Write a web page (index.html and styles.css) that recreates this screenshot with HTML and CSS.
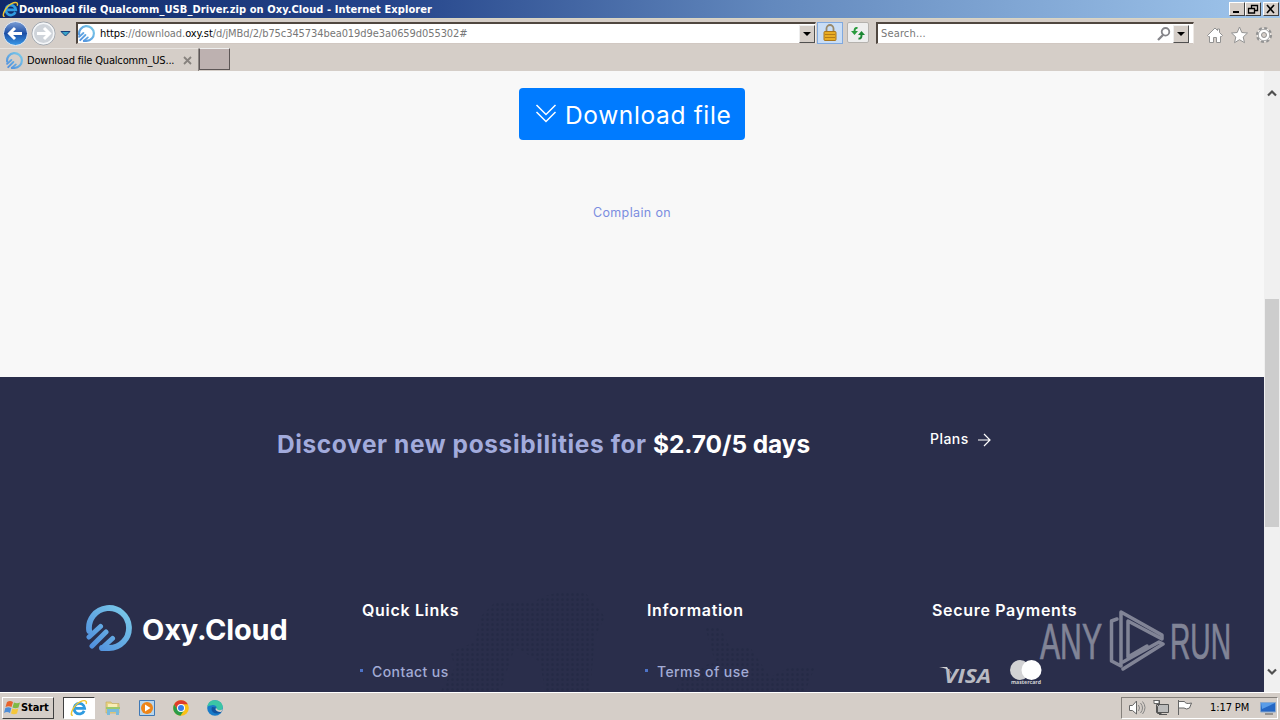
FILE: index.html
```html
<!DOCTYPE html>
<html lang="en">
<head>
  <meta charset="UTF-8">
  <title>Download file Qualcomm_USB_Driver.zip on Oxy.Cloud</title>
  <link rel="stylesheet" href="styles.css">
</head>
<body>
  <svg class="defs" width="0" height="0">
    <defs>
      <linearGradient id="oxyGrad" gradientUnits="userSpaceOnUse" x1="0" y1="46" x2="46" y2="0">
        <stop offset="0" stop-color="#4b88dc"/>
        <stop offset="1" stop-color="#7fd0ea"/>
      </linearGradient>
      <linearGradient id="backGrad" x1="0" y1="0" x2="0" y2="1">
        <stop offset="0" stop-color="#7d9fd6"/>
        <stop offset=".5" stop-color="#1d4fa6"/>
        <stop offset="1" stop-color="#3a9bea"/>
      </linearGradient>
      <pattern id="dots" width="5" height="5" patternUnits="userSpaceOnUse">
        <circle cx="2.5" cy="2.5" r="1.5" fill="#252a46"/>
      </pattern>
      <symbol id="oxy" viewBox="0 0 46 46">
        <path d="M3.200 26 A20 20 0 1 1 23 43 H16" fill="none" stroke="url(#oxyGrad)" stroke-width="5.800" stroke-linecap="round"/>
        <path d="M3 32 L14.500 21.500 M6 41 L20 27 M16 43 L26.500 33.500" fill="none" stroke="url(#oxyGrad)" stroke-width="5" stroke-linecap="round"/>
      </symbol>
      <symbol id="ie" viewBox="0 0 16 16">
        <path d="M12.600 10.500 A4.700 4.700 0 1 1 13 8.300 H5" fill="none" stroke="#2f9be0" stroke-width="2.500"/>
        <path d="M2.500 14.500 C-1 15 3 5.500 9 2.500 C13 .5 15.500 1.500 14.300 4.500" fill="none" stroke="#f0c531" stroke-width="1.300"/>
      </symbol>
    </defs>
  </svg>

  <div class="titlebar">
    <svg class="ie" width="17" height="17"><use href="#ie"/></svg>
    <span class="title">Download file Qualcomm_USB_Driver.zip on Oxy.Cloud - Internet Explorer</span>
    <div class="win-buttons">
      <span class="win-btn"><svg width="12" height="10"><path d="M2 8h6" stroke="#000" stroke-width="2"/></svg></span>
      <span class="win-btn"><svg width="12" height="10"><path d="M4.500 4V1.500H10.500V6.500H8M4 1.500H11M1.500 4.500H7.500V9H1.500ZM1 4.500H8" fill="none" stroke="#000" stroke-width="1.300"/></svg></span>
      <span class="win-btn close"><svg width="12" height="10"><path d="M2 1l7 8M9 1l-7 8" stroke="#000" stroke-width="1.600"/></svg></span>
    </div>
  </div>

  <div class="navbar">
    <svg class="arrows" width="72" height="28" viewBox="0 0 72 28">
      <circle cx="15.500" cy="14.500" r="12" fill="url(#backGrad)" stroke="#e9edf2"/>
      <path d="M22 14.500H10M15 9l-5.500 5.500 5.500 5.500" fill="none" stroke="#fff" stroke-width="3"/>
      <circle cx="43.500" cy="14.500" r="11.500" fill="#cfd4da" stroke="#9da3ab"/>
      <circle cx="43.500" cy="14.500" r="10.300" fill="none" stroke="#f4f6f8" stroke-width="1.500"/>
      <path d="M37 14.500h12M44 9l5.500 5.500-5.500 5.500" fill="none" stroke="#fff" stroke-width="3"/>
      <path d="M61 12.500h9l-4.500 4.500z" fill="#39a5c9" stroke="#173f7c"/>
    </svg>
    <div class="address">
      <svg width="17" height="17"><use href="#oxy"/></svg>
      <span class="url"><b>https</b>://download.<b>oxy.st</b>/d/jMBd/2/b75c345734bea019d9e3a0659d055302#</span>
      <span class="drop"></span>
    </div>
    <div class="lock">
      <svg width="16" height="18" viewBox="0 0 16 18">
        <path d="M4.500 8V4.500a3.500 3.500 0 0 1 7 0V8" fill="none" stroke="#99896a" stroke-width="1.800"/>
        <rect x="2" y="7.500" width="12" height="9" rx="1" fill="#e9ad23" stroke="#a9761c"/>
        <path d="M3 10.500h10M3 13.500h10" stroke="#b57c16"/>
      </svg>
    </div>
    <div class="refresh">
      <svg width="16" height="16" viewBox="0 0 16 16">
        <path d="M7.500 3C5 2.500 4.500 4 4.500 7" fill="none" stroke="#299b3d" stroke-width="2"/>
        <path d="M1 6h7l-3.500 4z" fill="#299b3d"/>
        <path d="M8.500 13.500c2.500.5 3-1 3-4" fill="none" stroke="#1b8733" stroke-width="2"/>
        <path d="M8 10h7l-3.500-4z" fill="#1b8733"/>
      </svg>
    </div>
    <div class="search">
      <span>Search...</span>
      <svg width="16" height="16" viewBox="0 0 16 16"><circle cx="9.500" cy="5.800" r="3.800" fill="none" stroke="#85858a" stroke-width="1.800"/><path d="M7 9l-5 5" stroke="#85858a" stroke-width="2.300"/></svg>
      <span class="drop"></span>
    </div>
    <svg class="tools" width="68" height="20" viewBox="0 0 68 20" fill="#fff" stroke="#929292">
      <path d="M1.500 10.500L9 3l2.500 2.500V4H13.500V7.500L16.500 10.500 15.500 11.500H14.500V17.500H10.500V12.500H7.500V17.500H3.500V11.500H2.500Z"/>
      <path d="M33.500 2l2.300 5.500 5.700.5-4.300 4 1.300 5.700-5-3-5 3 1.300-5.700-4.300-4 5.700-.5z"/>
      <circle cx="58" cy="10" r="6.800" stroke-width="2.600" stroke-dasharray="3 2.340"/>
      <circle cx="58" cy="10" r="5.900" stroke="none"/>
      <circle cx="58" cy="10" r="5.700" stroke-width=".8"/>
      <circle cx="58" cy="10" r="2.500" fill="#d5cec8"/>
    </svg>
  </div>

  <div class="tabs">
    <div class="tab">
      <svg width="17" height="17"><use href="#oxy"/></svg>
      <span>Download file Qualcomm_US...</span>
      <svg class="tab-close" width="9" height="9"><path d="M1 1l7 7M8 1l-7 7" stroke="#87827e" stroke-width="1.800"/></svg>
    </div>
    <div class="new-tab"></div>
  </div>

  <div class="viewport">
    <div class="page">
      <main>
        <a class="download">
          <svg width="22" height="20" viewBox="0 0 22 20"><path d="M1.500 1l9.500 9.500L20.500 1M1.500 8l9.500 9.500L20.500 8" fill="none" stroke="#fff" stroke-width="1.500"/></svg>
          <span>Download file</span>
        </a>
        <a class="complain">Complain on</a>
      </main>
      <footer>
        <svg class="map" width="440" height="105" viewBox="0 0 440 105">
          <path d="M10 65L35 55L40 30L55 15H95L100 10L120 5H145L165 30L155 50L150 105H105L100 75L75 60L70 75L60 105H0L15 80Z" fill="url(#dots)"/>
          <path d="M265 40H280L290 60H310L320 75L330 90L350 80H375L365 105H235L245 85L275 75Z" fill="url(#dots)"/>
        </svg>
        <div class="promo">
          <h2>Discover new possibilities for <b>$2.70/5 days</b></h2>
          <a class="plans"><span>Plans</span> <svg width="14" height="14" viewBox="0 0 14 14"><path d="M1 7h12M7 1l6 6-6 6" fill="none" stroke="#fff" stroke-width="1.200"/></svg></a>
        </div>
        <div class="columns">
          <div class="brand">
            <svg width="46" height="46"><use href="#oxy"/></svg>
            <span>Oxy.Cloud</span>
          </div>
          <div class="column">
            <h3 class="quick">Quick Links</h3>
            <a class="contact">Contact us</a>
          </div>
          <div class="column">
            <h3 class="info">Information</h3>
            <a class="terms">Terms of use</a>
          </div>
          <div class="column">
            <h3 class="secure">Secure Payments</h3>
            <div class="cards">
              <svg width="56" height="24" viewBox="0 0 56 24">
                <path d="M-1 3h8l5 8-1-3C8 5 4 4 -1 3z" fill="#d2d2d4"/>
                <text x="4" y="19" textLength="47" lengthAdjust="spacingAndGlyphs">VISA</text>
              </svg>
              <svg width="34" height="30" viewBox="0 0 34 30">
                <circle cx="10" cy="10" r="10" fill="#d2d2d4"/>
                <circle cx="21.500" cy="10" r="10" fill="#fff"/>
                <text class="mc" x="1" y="24" textLength="30" lengthAdjust="spacingAndGlyphs">mastercard</text>
              </svg>
            </div>
          </div>
        </div>
      </footer>
    </div>
    <div class="scrollbar">
      <svg width="12" height="8"><path d="M2 6.500L6 2.500l4 4" fill="none" stroke="#505050" stroke-width="2.200"/></svg>
      <div class="thumb"></div>
      <svg width="12" height="8"><path d="M2 1.500L6 5.500l4-4" fill="none" stroke="#505050" stroke-width="2.200"/></svg>
    </div>
    <svg class="watermark" width="200" height="66" viewBox="0 0 200 66">
      <text x="2" y="49" textLength="62" lengthAdjust="spacingAndGlyphs">ANY</text>
      <g fill="none" stroke-width="3.500" stroke-linejoin="round" stroke-linecap="round">
        <path d="M79 9L73.500 11V51L83 56V2L124 25V29L90 11V47L109 36"/>
        <path d="M85 59L125 34L121 32L85 52"/>
      </g>
      <text x="132" y="49" textLength="61" lengthAdjust="spacingAndGlyphs">RUN</text>
    </svg>
  </div>

  <div class="taskbar">
    <div class="start">
      <svg width="17" height="16" viewBox="0 0 17 16">
        <path d="M3 2q3-2 6 0L7.500 7q-3-1.500-6 0z" fill="#e8632c"/>
        <path d="M10 2.500q3 1.500 6 0L14.500 7.500q-3 1.500-6 0z" fill="#7fb944"/>
        <path d="M1.300 8q3-1.500 6 0L6 13q-3-2-6 0z" fill="#4d8dd8"/>
        <path d="M8.300 8.500q3 1.500 6 0L13 13.500q-3 1.500-6 0z" fill="#f5c73c"/>
      </svg>
      <span>Start</span>
    </div>
    <div class="task active"><svg width="18" height="18"><use href="#ie"/></svg></div>
    <div class="task">
      <svg width="16" height="16" viewBox="0 0 16 16">
        <path d="M1 2h5l1 1.500h7V13H1z" fill="#e7d183" stroke="#c3ab59" stroke-width=".6"/>
        <path d="M3 4h9v4H3z" fill="#f9edb6"/><path d="M1 7h14v2H1z" fill="#9cc86c"/>
        <path d="M2 15V9h12v6h-3v-3H5v3z" fill="#79bbdc"/>
      </svg>
    </div>
    <div class="task">
      <svg width="16" height="16" viewBox="0 0 16 16">
        <path d="M.5.5h15v15H.5z" fill="#b9d6ec" stroke="#3f78b5"/><circle cx="8" cy="8" r="6" fill="#ee8518"/><path d="M6 4.500l5.500 3.500L6 11.500z" fill="#fff"/>
      </svg>
    </div>
    <div class="task">
      <svg width="16" height="16" viewBox="0 0 16 16">
        <circle cx="8" cy="8" r="7.800" fill="#fbc116"/>
        <path d="M1.200 4.200A7.800 7.800 0 0 1 14.800 4.200H8L4.700 10z" fill="#df3b2c"/>
        <path d="M1.200 4.200A7.800 7.800 0 0 0 7.400 15.800L11.300 10H4.700z" fill="#2b9c48"/>
        <circle cx="8" cy="8" r="4" fill="#fff"/><circle cx="8" cy="8" r="3" fill="#387de8"/>
      </svg>
    </div>
    <div class="task">
      <svg width="16" height="16" viewBox="0 0 16 16">
        <circle cx="8" cy="8" r="7.800" fill="#197bc9"/>
        <path d="M.3 7C1 2 4 .2 8 .2c5 0 8.500 4 7.600 8-1 3-5 3-6.600 1.500 2-3-1-5-4-4.500C3 5.300 1 6 .3 7z" fill="#3bc5a5"/>
        <path d="M5 7c-2 5 3 8 9 5.500l1-2c-4 2-8-.5-6-3z" fill="#13539e"/>
        <path d="M9 10.300c-1-.8 0-2 0-2.500 2 3 4 3 6.500 1.500l-1 2.500c-2 .5-4 0-5.500-1.500z" fill="#d5cec8"/>
      </svg>
    </div>
    <div class="tray">
      <svg width="66" height="18" viewBox="0 0 66 18" fill="#fff" stroke="#666">
        <path d="M1.500 6.500h3L8.500 2v13L4.500 11.500h-3z"/><path d="M10.500 6q2 3 0 6M12.500 4q4 5 0 10M14.500 2.500q5 6 0 12.500" fill="none" stroke="#858585"/>
        <path d="M28.500 5.500h12v8h-12zM31 15.500h8" fill="#bbb" stroke="#555"/>
        <path d="M25.500 1.500h6v4l-2 2v7h4" fill="none" stroke="#555"/><path d="M26 1.500h5v3h-5z"/>
        <path d="M50.500 1v15M50.500 2.500h6q1 3 7 1.500l-2 5q-3 2-5.500 0h-5.500z"/>
      </svg>
      <span class="clock">1:17 PM</span>
      <svg width="17" height="14" viewBox="0 0 17 14"><path d="M.5 1.500h15v9.500H.5z" fill="#2567c4" stroke="#8aa9cd"/><path d="M1 2h14L2 8z" fill="#5a9de8"/><path d="M5 13h8" stroke="#555"/></svg>
    </div>
  </div>
</body>
</html>
```
FILE: styles.css
```css
* {
  box-sizing: border-box;
}

body {
  margin: 0;
  width: 1280px;
  height: 720px;
  overflow: hidden;
  display: flex;
  flex-direction: column;
  background: #d5cec8;
  font-family: "DejaVu Sans Condensed", "DejaVu Sans", sans-serif;
  font-stretch: condensed;
  font-size: 11px;
  color: #000;
}

svg {
  display: block;
  flex-shrink: 0;
}

span, a, h2, h3 {
  white-space: nowrap;
}

.defs {
  position: absolute;
}

/* window chrome */
.titlebar {
  height: 18px;
  display: flex;
  align-items: center;
  padding: 0 2px;
  background: linear-gradient(90deg, #102969 0, #24448a 30%, #6288bd 60%, #a0c6ec 100%);
  color: #fff;
}

.title {
  font-weight: bold;
  letter-spacing: 0.08px;
}

.win-buttons {
  display: flex;
  margin-left: auto;
  margin-right: -1px;
}

.win-btn {
  width: 16px;
  height: 14px;
  padding: 1px;
  background: #d5cec8;
  border: 1px solid;
  border-color: #fff #404040 #404040 #fff;
}

.close {
  margin-left: 2px;
}

.navbar {
  height: 30px;
  display: flex;
  align-items: flex-start;
  border-top: 1px solid #d9d5c2;
}

.address, .search {
  height: 22px;
  margin-top: 3px;
  display: flex;
  align-items: center;
  background: #fff;
  border: 1px solid;
  border-top-width: 2px;
  border-left-width: 2px;
  border-color: #504740 #eee9e5 #d1c8c2 #504740;
  color: #777;
}

.address {
  width: 740px;
  margin-left: 4px;
}

.url {
  margin-left: 5px;
  letter-spacing: -0.08px;
}

.url b {
  font-weight: normal;
  color: #000;
}

.drop {
  width: 16px;
  height: 18px;
  margin-left: auto;
  display: flex;
  align-items: center;
  justify-content: center;
  background: #d5cec8;
  border: 1px solid;
  border-color: #eee #505050 #505050 #eee;
}

.drop::after {
  content: "";
  border: 4px solid transparent;
  border-top-color: #000;
  border-bottom: 0;
}

.lock {
  width: 26px;
  height: 22px;
  margin: 3px 0 0 1px;
  padding: 1px 4px;
  background: #c9ddf5;
  border: 1px solid #80a9df;
}

.refresh {
  width: 22px;
  height: 21px;
  margin: 3px 0 0 4px;
  padding: 2px;
  background: #eee;
  border: 1px solid #b5b2ae;
  border-radius: 2px;
}

.search {
  width: 318px;
  margin-left: 7px;
  padding-left: 3px;
}

.search span:first-child {
  letter-spacing: 0.15px;
}

.search svg {
  margin-left: auto;
}

.search .drop {
  margin: 0 4px 0 1px;
}

.tools {
  margin: 6px 0 0 12px;
}

.tabs {
  height: 23px;
  display: flex;
}

.tab {
  width: 199px;
  display: flex;
  align-items: center;
  padding-left: 6px;
  border-top: 1px solid #e7e3df;
  border-right: 1px solid #8d8783;
}

.tab span {
  margin-left: 4px;
  letter-spacing: -0.17px;
}

.tab-close {
  margin-left: auto;
  margin-right: 6px;
}

.new-tab {
  width: 31px;
  height: 22px;
  background: #bdb1b0;
  border: 1px solid #5d5656;
  border-top-color: #eee;
}

/* web page */
.viewport {
  position: relative;
  height: 621px;
  display: flex;
  font-family: Inter, sans-serif;
  font-stretch: normal;
}

.page {
  width: 1264px;
  overflow: hidden;
}

main {
  height: 306px;
  display: flex;
  flex-direction: column;
  align-items: center;
  padding-top: 17px;
  background: #f8f8f8;
}

.download {
  width: 226px;
  height: 52px;
  display: flex;
  align-items: center;
  padding-left: 16px;
  background: #007bff;
  border-radius: 4px;
  color: #fff;
  font-size: 24.5px;
}

.download span {
  margin: 1px 0 0 8px;
  letter-spacing: 0.63px;
}

.complain {
  margin-top: 65px;
  font-size: 12.5px;
  line-height: 16px;
  letter-spacing: 0.36px;
  color: #7b8de0;
}

footer {
  position: relative;
  height: 315px;
  background: #2a2e4b;
}

.map {
  position: absolute;
  left: 440px;
  top: 210px;
}

.promo {
  position: relative;
  display: flex;
  height: 228px;
  padding: 50px 0 0 277px;
}

.promo h2 {
  width: 653px;
  margin: 0;
  font-size: 24.5px;
  line-height: 34px;
  letter-spacing: 0.6px;
  color: #a2abdc;
}

.promo b {
  font-weight: 700;
  letter-spacing: -0.1px;
  color: #fff;
}

.plans {
  height: 25px;
  display: flex;
  align-items: center;
  gap: 8px;
  font-size: 14px;
  font-weight: 500;
  letter-spacing: 0.45px;
  color: #fff;
}

.plans span {
  margin-top: -2px;
}

.columns {
  position: relative;
  display: flex;
  padding-left: 86px;
}

.brand {
  width: 276px;
  height: 46px;
  display: flex;
  align-items: center;
  gap: 10px;
  color: #fff;
  font-size: 29px;
  font-weight: 700;
  letter-spacing: -0.2px;
}

.brand span {
  margin-top: 2px;
}

.column {
  width: 285px;
}

.column h3 {
  margin: -5px 0 42px;
  font-size: 16px;
  line-height: 20px;
  font-weight: 600;
  letter-spacing: 0.68px;
  color: #fff;
}

.column a {
  display: block;
  margin-left: -2px;
  font-size: 14px;
  line-height: 20px;
  font-weight: 500;
  letter-spacing: 0.42px;
  color: #a2abd5;
}

.column a::before {
  content: "";
  display: inline-block;
  width: 3px;
  height: 3px;
  margin-right: 9px;
  vertical-align: 5px;
  background: #4d73c8;
}

.column .secure {
  margin-bottom: 40px;
}

.cards {
  display: flex;
  gap: 14px;
  padding-left: 8px;
}

.cards svg {
  overflow: visible;
}

.cards svg:first-child {
  margin-top: 4px;
}

.cards text {
  font: italic bold 20px "Open Sans", sans-serif;
  fill: #b9bac2;
}

.cards .mc {
  font: bold 5px "Open Sans", sans-serif;
  fill: #d2d2d4;
}

.scrollbar {
  width: 16px;
  display: flex;
  flex-direction: column;
  align-items: center;
  padding-top: 18px;
  background: #f0f0f0;
}

.thumb {
  width: 14px;
  height: 228px;
  margin: 202px 0 141px;
  background: #cdcdcd;
}

.watermark {
  position: absolute;
  left: 1038px;
  top: 539px;
  overflow: visible;
  opacity: 0.5;
  stroke: #d8dae0;
}

.watermark text {
  font: 50px "Liberation Sans", sans-serif;
  fill: #d8dae0;
  stroke-width: 0.7px;
}

/* taskbar */
.taskbar {
  height: 28px;
  display: flex;
  align-items: center;
  padding: 2px 2px 0;
  border-top: 1px solid #fff;
}

.start {
  width: 52px;
  height: 22px;
  display: flex;
  align-items: center;
  padding-left: 1px;
  border: 1px solid;
  border-color: #fff #404040 #404040 #fff;
  font-weight: bold;
}

.start span {
  letter-spacing: -0.1px;
}

.task {
  width: 32px;
  height: 22px;
  display: flex;
  align-items: center;
  justify-content: center;
  margin-right: 2px;
}

.active {
  margin-left: 9px;
  background: #fff;
  border: 1px solid;
  border-color: #404040 #fff #fff #404040;
}

.tray {
  width: 157px;
  height: 22px;
  display: flex;
  align-items: center;
  margin-left: auto;
  padding-left: 6px;
  border: 1px solid;
  border-color: #85807b #fff #fff #85807b;
}

.clock {
  margin: 0 11px 0 16px;
  letter-spacing: -0.1px;
}
```
